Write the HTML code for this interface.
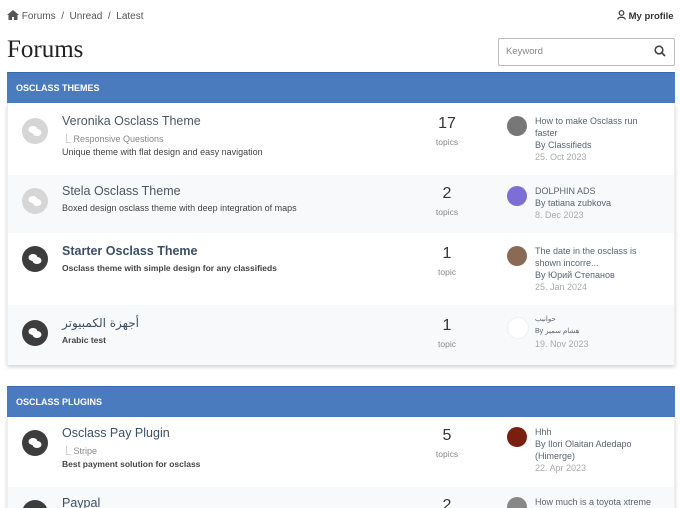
<!DOCTYPE html>
<html><head><meta charset="utf-8"><style>
html,body{margin:0;height:508px;overflow:hidden}
body{background:#fff;font-family:"Liberation Sans","Noto Sans CJK SC",sans-serif;width:680px;position:relative;color:#333}
.a{position:absolute;white-space:nowrap}
.bc{top:10px;left:7px;font-size:10px;color:#555}
.hd{position:absolute;left:7px;width:668px;height:30px;background:#4a7bbf;color:#fff;font-size:9px;font-weight:bold;line-height:30px;text-indent:9px;border-top:1px solid #3b6aa8}
.box{position:absolute;left:7px;width:668px;box-shadow:0 2px 4px rgba(0,0,0,.18)}
.row{position:relative;border-left:1px solid #eee;border-right:1px solid #eee}
.g{background:#f8f9fa}
.ic{position:absolute;left:14px;width:26px;height:26px;border-radius:50%;background:#3d3d3d}
.ic.l{background:#d6d6d6}
.ic svg{position:absolute;left:6px;top:7px}
.t{position:absolute;left:54px;font-size:12.5px;color:#3a4f66}
.s{position:absolute;left:54px;font-size:9px;color:#888}
.d{position:absolute;left:54px;font-size:9px;color:#444}
.n{position:absolute;left:409px;width:60px;text-align:center;font-size:16px;color:#333}
.nl{position:absolute;left:409px;width:60px;text-align:center;font-size:8.5px;color:#888}
.av{position:absolute;left:499px;width:20px;height:20px;border-radius:50%}
.lt{position:absolute;left:527px;font-size:9px;color:#5a6472;line-height:12px}
.lt .dt{color:#aaa}
</style></head><body>
<div class="a bc"><svg width="12" height="10" viewBox="0 0 12 10" style="vertical-align:-1px"><path d="M6 0L0 5h1.5v5h3.5V7h2v3h3.5V5H12z" fill="#555"/></svg> Forums &nbsp;/&nbsp; Unread &nbsp;/&nbsp; Latest</div>
<div class="a" style="top:10px;left:617px;font-size:9.5px;color:#333;font-weight:bold"><svg width="9" height="10" viewBox="0 0 9 10" style="vertical-align:-1px"><circle cx="4.5" cy="3" r="2.3" fill="none" stroke="#333" stroke-width="1.2"/><path d="M0.8 9.5c0-3 7.4-3 7.4 0" fill="none" stroke="#333" stroke-width="1.2"/></svg> My profile</div>
<div class="a" style="top:36px;left:7px;font-family:'Liberation Serif',serif;font-size:25px;color:#222">Forums</div>
<div class="a" style="top:38px;left:498px;width:175px;height:26px;border:1px solid #bbb;border-radius:2px"><span class="a" style="left:7px;top:7px;font-size:9.5px;color:#888">Keyword</span><svg class="a" style="right:8px;top:6px" width="12" height="12" viewBox="0 0 12 12"><circle cx="5" cy="5" r="3.8" fill="none" stroke="#444" stroke-width="1.6"/><path d="M7.8 7.8L11 11" stroke="#444" stroke-width="1.8"/></svg></div>

<div class="hd" style="top:72px">OSCLASS THEMES</div>
<div class="box" style="top:103px">
<div class="row" style="height:72px"><div class="ic l" style="top:15px"><svg width="14" height="12" viewBox="0 0 14 12"><ellipse cx="5" cy="4.5" rx="4.5" ry="3.5" fill="#fff"/><ellipse cx="9" cy="7.5" rx="4.5" ry="3.5" fill="#fff"/></svg></div>
<div class="t" style="top:11px;color:#4a5866">Veronika Osclass Theme</div><div class="s" style="top:29px">⎿ Responsive Questions</div><div class="d" style="top:44px">Unique theme with flat design and easy navigation</div>
<div class="n" style="top:12px">17</div><div class="nl" style="top:34px">topics</div>
<div class="av" style="top:13px;background:#777"></div><div class="lt" style="top:12px">How to make Osclass run<br>faster<br>By Classifieds<br><span class="dt">25. Oct 2023</span></div></div>
<div class="row g" style="height:58px"><div class="ic l" style="top:13px"><svg width="14" height="12" viewBox="0 0 14 12"><ellipse cx="5" cy="4.5" rx="4.5" ry="3.5" fill="#fff"/><ellipse cx="9" cy="7.5" rx="4.5" ry="3.5" fill="#fff"/></svg></div>
<div class="t" style="top:9px;color:#4a5866">Stela Osclass Theme</div><div class="d" style="top:28px">Boxed design osclass theme with deep integration of maps</div>
<div class="n" style="top:10px">2</div><div class="nl" style="top:32px">topics</div>
<div class="av" style="top:11px;background:#7b6fd6"></div><div class="lt" style="top:10px">DOLPHIN ADS<br>By tatiana zubkova<br><span class="dt">8. Dec 2023</span></div></div>
<div class="row" style="height:72px"><div class="ic" style="top:13px"><svg width="14" height="12" viewBox="0 0 14 12"><ellipse cx="5" cy="4.5" rx="4.5" ry="3.5" fill="#fff"/><ellipse cx="9" cy="7.5" rx="4.5" ry="3.5" fill="#fff"/></svg></div>
<div class="t" style="top:11px;font-weight:bold">Starter Osclass Theme</div><div class="d" style="top:30px;font-weight:bold;font-size:8.5px">Osclass theme with simple design for any classifieds</div>
<div class="n" style="top:12px">1</div><div class="nl" style="top:34px">topic</div>
<div class="av" style="top:13px;background:#8a6a55"></div><div class="lt" style="top:12px">The date in the osclass is<br>shown incorre...<br>By Юрий Степанов<br><span class="dt">25. Jan 2024</span></div></div>
<div class="row g" style="height:60px"><div class="ic" style="top:15px"><svg width="14" height="12" viewBox="0 0 14 12"><ellipse cx="5" cy="4.5" rx="4.5" ry="3.5" fill="#fff"/><ellipse cx="9" cy="7.5" rx="4.5" ry="3.5" fill="#fff"/></svg></div>
<div class="t" style="top:11px;font-family:'DejaVu Sans',sans-serif;font-size:12px">أجهزة الكمبيوتر</div><div class="d" style="top:30px;font-weight:bold;font-size:8.5px">Arabic test</div>
<div class="n" style="top:12px">1</div><div class="nl" style="top:34px">topic</div>
<div class="av" style="top:12px;border:1px solid #eee;background:#fff"></div><div class="lt" style="top:9px;font-size:7px">حوانيب<br>By هشام سمير<br><span class="dt" style="font-size:9px">19. Nov 2023</span></div></div>
</div>

<div class="hd" style="top:386px">OSCLASS PLUGINS</div>
<div class="box" style="top:417px">
<div class="row" style="height:70px"><div class="ic" style="top:13px"><svg width="14" height="12" viewBox="0 0 14 12"><ellipse cx="5" cy="4.5" rx="4.5" ry="3.5" fill="#fff"/><ellipse cx="9" cy="7.5" rx="4.5" ry="3.5" fill="#fff"/></svg></div>
<div class="t" style="top:9px">Osclass Pay Plugin</div><div class="s" style="top:27px">⎿ Stripe</div><div class="d" style="top:42px;font-weight:bold;font-size:8.5px">Best payment solution for osclass</div>
<div class="n" style="top:10px">5</div><div class="nl" style="top:32px">topics</div>
<div class="av" style="top:10px;background:#7a1f10"></div><div class="lt" style="top:9px">Hhh<br>By Ilori Olaitan Adedapo<br>(Himerge)<br><span class="dt">22. Apr 2023</span></div></div>
<div class="row g" style="height:40px"><div class="ic" style="top:13px"></div>
<div class="t" style="top:9px">Paypal</div><div class="n" style="top:10px">2</div>
<div class="av" style="top:10px;background:#888"></div><div class="lt" style="top:9px">How much is a toyota xtreme</div></div>
</div>
</body></html>
